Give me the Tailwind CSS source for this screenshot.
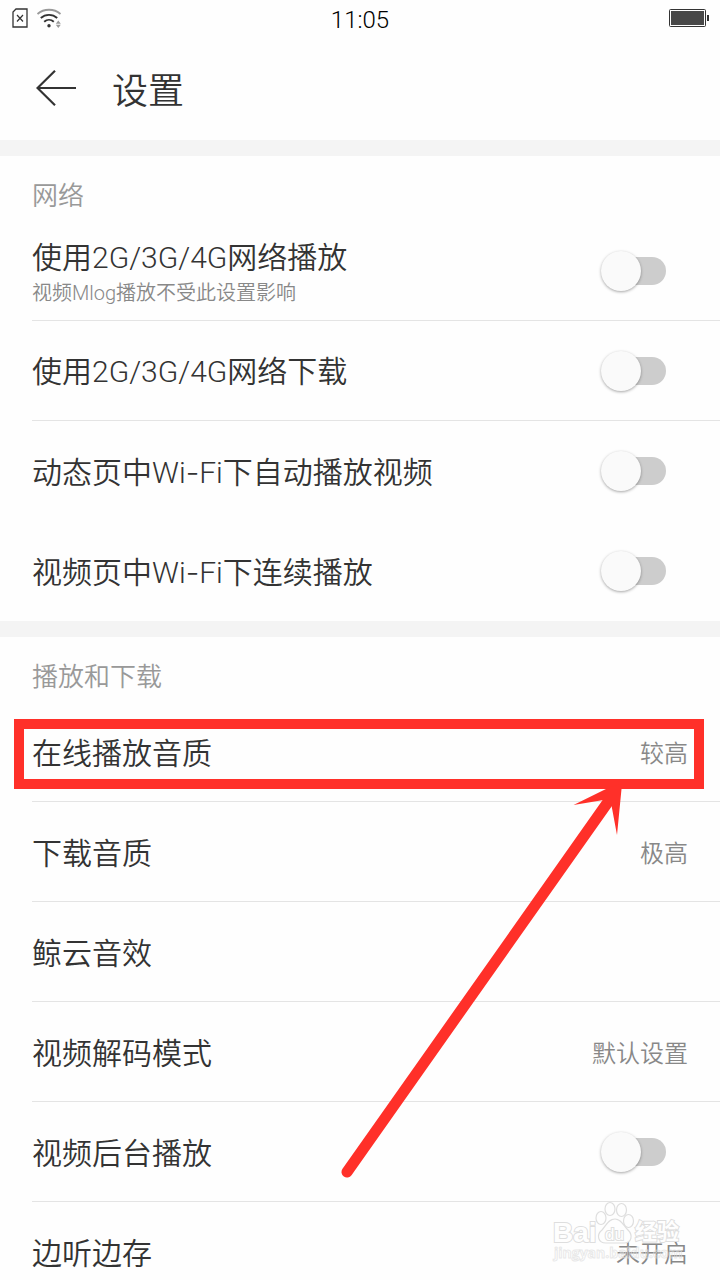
<!DOCTYPE html>
<html lang="zh-CN">
<head>
<meta charset="utf-8">
<meta name="viewport" content="width=device-width, initial-scale=1">
<title>设置</title>
<script src="https://cdn.jsdelivr.net/npm/@tailwindcss/browser@4"></script>
</head>
<body class="bg-[#fefefe] font-['Roboto','Noto_Sans_CJK_SC',sans-serif] font-[350] text-[#333]">
<div class="relative flex h-screen flex-col overflow-hidden">

  <!-- Status bar -->
  <div class="mb-1 grid h-9 shrink-0 grid-cols-3 items-center px-3">
    <div class="flex items-center gap-2">
      <svg class="h-5 w-4" viewBox="0 0 16 20" fill="none" stroke="#333" aria-hidden="true">
        <path d="M4 1H15V19H1V4Z" stroke-width="1.3"/>
        <path d="M5 7l6 6.500M11 7l-6 6.500" stroke-width="1.2"/>
      </svg>
      <svg class="h-5 w-[26px]" viewBox="0 0 26 20" fill="none" aria-hidden="true">
        <path d="M1.500 6C8 .3 18 .3 24.500 6" stroke="#999" stroke-width="1.800"/>
        <path d="M4.800 10C9.500 5.800 16.500 5.800 21.200 10" stroke="#333" stroke-width="1.900"/>
        <path d="M8.200 13.800C11 11.200 15 11.200 17.800 13.800" stroke="#333" stroke-width="1.900"/>
        <circle cx="13" cy="17.800" r="1.700" fill="#333"/>
        <path d="M22.300 12.500l2.500 3.200h-5zM22.300 20l2.500-3.200h-5z" fill="#999"/>
      </svg>
    </div>
    <div class="pt-1 text-center text-2xl leading-7 text-black">11:05</div>
    <svg class="-mr-px h-5 w-10 justify-self-end" viewBox="0 0 40 20" aria-hidden="true">
      <rect x=".5" y="1.500" width="36" height="17" rx="1" fill="none" stroke="#333"/>
      <rect x="2" y="3" width="33" height="14" fill="#484848"/>
      <rect x="38" y="7" width="2" height="6" fill="#333"/>
    </svg>
  </div>

  <!-- Title bar -->
  <header class="flex h-[100px] shrink-0 items-center gap-9 pl-9">
    <button type="button" aria-label="返回" class="pb-1">
      <svg class="h-9 w-10" viewBox="0 0 40 36" fill="none" stroke="#333" stroke-width="2.200" aria-hidden="true">
        <path d="M40 18H1.500M19 .8L1.500 18L19 35.200"/>
      </svg>
    </button>
    <h1 class="pt-1 text-4xl leading-[48px] font-[350]">设置</h1>
  </header>

  <main class="flex-1 overflow-y-auto [scrollbar-width:none]">
    <section class="border-t-[16px] border-[#f4f4f4]">
      <h2 class="h-[65px] pt-4 pl-8 text-[26px] leading-[49px] font-[350] text-[#999]">网络</h2>
      <ul class="pl-8 text-[30px] leading-10">
        <li class="flex h-[100px] items-center justify-between border-b border-[#e4e4e4] pr-[54px]">
          <label for="net-play" class="pt-1">使用2G/3G/4G网络播放<span class="mt-px block text-xl leading-7 text-[#888]">视频Mlog播放不受此设置影响</span></label>
          <input id="net-play" type="checkbox" role="switch" class="relative h-7 w-[58px] shrink-0 appearance-none rounded-full bg-[#cdcdcd] before:absolute before:-top-1.5 before:-left-[7px] before:size-10 before:rounded-full before:bg-[#fafafa] before:shadow-[0_1px_3px_rgba(0,0,0,0.35)] checked:bg-red-300 checked:before:left-[25px]">
        </li>
        <li class="flex h-[100px] items-center justify-between border-b border-[#e4e4e4] pr-[54px]">
          <label for="net-down" class="pt-0.5">使用2G/3G/4G网络下载</label>
          <input id="net-down" type="checkbox" role="switch" class="relative h-7 w-[58px] shrink-0 appearance-none rounded-full bg-[#cdcdcd] before:absolute before:-top-1.5 before:-left-[7px] before:size-10 before:rounded-full before:bg-[#fafafa] before:shadow-[0_1px_3px_rgba(0,0,0,0.35)] checked:bg-red-300 checked:before:left-[25px]">
        </li>
        <li class="flex h-[100px] items-center justify-between pr-[54px]">
          <label for="auto-play" class="pt-0.5">动态页中Wi<span class="font-['Inter',sans-serif]">-</span>Fi下自动播放视频</label>
          <input id="auto-play" type="checkbox" role="switch" class="relative h-7 w-[58px] shrink-0 appearance-none rounded-full bg-[#cdcdcd] before:absolute before:-top-1.5 before:-left-[7px] before:size-10 before:rounded-full before:bg-[#fafafa] before:shadow-[0_1px_3px_rgba(0,0,0,0.35)] checked:bg-red-300 checked:before:left-[25px]">
        </li>
        <li class="flex h-[100px] items-center justify-between pr-[54px]">
          <label for="next-play" class="pt-0.5">视频页中Wi<span class="font-['Inter',sans-serif]">-</span>Fi下连续播放</label>
          <input id="next-play" type="checkbox" role="switch" class="relative h-7 w-[58px] shrink-0 appearance-none rounded-full bg-[#cdcdcd] before:absolute before:-top-1.5 before:-left-[7px] before:size-10 before:rounded-full before:bg-[#fafafa] before:shadow-[0_1px_3px_rgba(0,0,0,0.35)] checked:bg-red-300 checked:before:left-[25px]">
        </li>
      </ul>
    </section>

    <section class="relative border-t-[16px] border-[#f4f4f4]">
      <h2 class="h-[65px] pt-4 pl-8 text-[26px] leading-[49px] font-[350] text-[#999]">播放和下载</h2>
      <ul class="pl-8 text-[30px] leading-10">
        <li class="flex h-[100px] items-center justify-between border-b border-[#e4e4e4] pr-8">
          <span class="pt-1">在线播放音质</span><span class="pt-1 text-2xl text-[#888]">较高</span>
        </li>
        <li class="flex h-[100px] items-center justify-between border-b border-[#e4e4e4] pr-8">
          <span class="pt-1">下载音质</span><span class="pt-1 text-2xl text-[#888]">极高</span>
        </li>
        <li class="flex h-[100px] items-center justify-between border-b border-[#e4e4e4] pr-8">
          <span class="pt-1">鲸云音效</span>
        </li>
        <li class="flex h-[100px] items-center justify-between border-b border-[#e4e4e4] pr-8">
          <span class="pt-1">视频解码模式</span><span class="pt-1 text-2xl text-[#888]">默认设置</span>
        </li>
        <li class="flex h-[100px] items-center justify-between border-b border-[#e4e4e4] pr-[54px]">
          <label for="bg-play" class="pt-1">视频后台播放</label>
          <input id="bg-play" type="checkbox" role="switch" class="relative h-7 w-[58px] shrink-0 appearance-none rounded-full bg-[#cdcdcd] before:absolute before:-top-1.5 before:-left-[7px] before:size-10 before:rounded-full before:bg-[#fafafa] before:shadow-[0_1px_3px_rgba(0,0,0,0.35)] checked:bg-red-300 checked:before:left-[25px]">
        </li>
        <li class="flex h-[100px] items-center justify-between pr-8">
          <span class="pt-1">边听边存</span><span class="pt-1 text-2xl text-[#888]">未开启</span>
        </li>
      </ul>

      <!-- Highlight frame and pointer -->
      <div class="pointer-events-none absolute top-[82px] right-4 left-[14px] h-[70px] border-[10px] border-[#ff3029]"></div>
      <svg class="pointer-events-none absolute top-[143px] right-[90px] h-[400px] w-[290px]" viewBox="340 780 290 400" fill="#ff3029" aria-hidden="true">
        <path d="M347 1172L608 802" stroke="#ff3029" stroke-width="11" stroke-linecap="round"/>
        <path d="M622 784L617 835L611.500 805.500L603.500 800L573.500 805L610 787Z"/>
      </svg>
    </section>
  </main>

  <!-- Watermark -->
  <svg class="pointer-events-none absolute right-9 bottom-3 h-[70px] w-[136px]" viewBox="548 1198 136 70" fill="#fefefe" stroke="#dedede" font-weight="700" aria-hidden="true">
    <g stroke-width="1.200">
      <ellipse cx="601" cy="1218" rx="5" ry="6.500"/>
      <ellipse cx="610" cy="1209" rx="5" ry="6.500"/>
      <ellipse cx="621.500" cy="1210" rx="5" ry="6.500"/>
      <ellipse cx="628.500" cy="1221" rx="5" ry="6.500"/>
      <path d="M615 1219C608 1219 606 1226 602 1230C596 1235 598 1243 606 1243C611 1243 619 1243 624 1243C632 1243 633 1235 628 1230C623 1225 621 1219 615 1219Z"/>
    </g>
    <g stroke-width="2" paint-order="stroke">
      <text x="553" y="1242" font-size="28" font-family="Liberation Sans, sans-serif">Bai</text>
      <text x="605" y="1240" font-size="17" font-weight="400" font-family="Liberation Sans, sans-serif">du</text>
      <text x="635" y="1239" font-size="22" font-family="Noto Sans CJK SC, sans-serif">经验</text>
    </g>
    <text x="554" y="1258" font-size="14" fill="none" stroke-width="1" stroke-opacity=".7" font-family="Open Sans, sans-serif">jingyan.baidu.com</text>
  </svg>
</div>
</body>
</html>
